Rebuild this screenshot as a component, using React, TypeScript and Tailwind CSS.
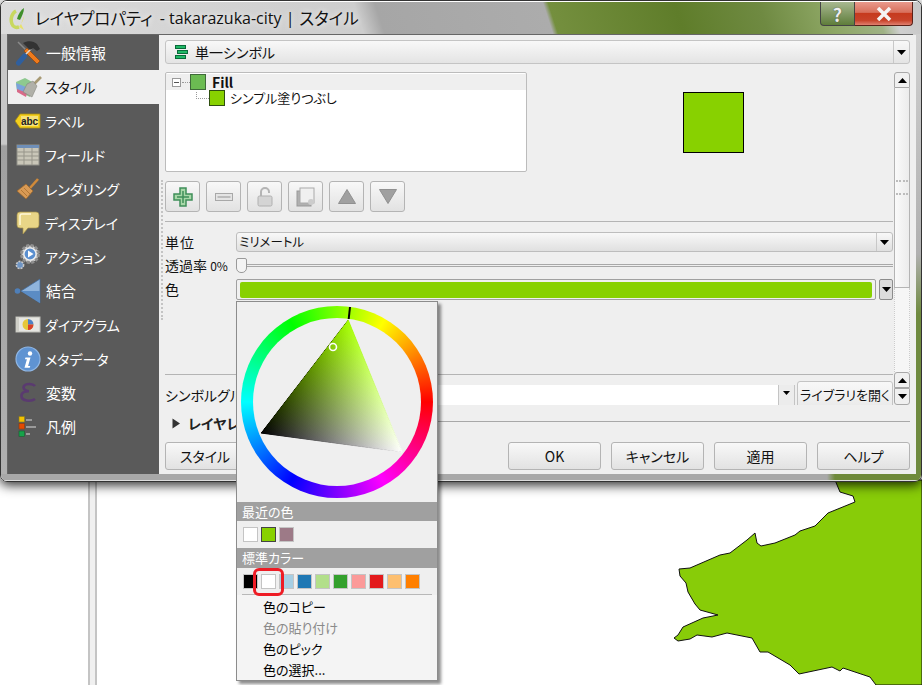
const sideItems = [
  { label: "一般情報", icon: <ToolsIcon />, kanji: true },
  { label: "スタイル", icon: <BrushIcon />, active: true },
  { label: "ラベル", icon: <LabelIcon /> },
  { label: "フィールド", icon: <TableIcon /> },
  { label: "レンダリング", icon: <BroomIcon /> },
  { label: "ディスプレイ", icon: <BubbleIcon /> },
  { label: "アクション", icon: <GearIcon /> },
  { label: "結合", icon: <JoinIcon />, kanji: true },
  { label: "ダイアグラム", icon: <DiagramIcon /> },
  { label: "メタデータ", icon: <InfoIcon /> },
  { label: "変数", icon: <EpsilonIcon />, kanji: true },
  { label: "凡例", icon: <LegendIcon />, kanji: true },
];

const recentColors = ["bg-white border-[#c4c4c4]", "bg-[#88d100] border-[#444]", "bg-[#9d7a87] border-[#c4c4c4]"];
const standardColors = [
  "bg-black",
  "bg-white",
  "bg-[#a6cee3]",
  "bg-[#1f78b4]",
  "bg-[#b2df8a]",
  "bg-[#33a02c]",
  "bg-[#fb9a99]",
  "bg-[#e31a1c]",
  "bg-[#fdbf6f]",
  "bg-[#ff7f00]",
];

const btnClass =
  "flex items-center justify-center rounded-[3px] border border-[#b4b4b4] bg-gradient-to-b from-[#f8f8f8] to-[#e2e2e2] text-[14px] text-[#111]";

function ToolsIcon() {
  return (
    <svg width="26" height="26" viewBox="0 0 26 26">
      <path d="M3 2l9 9" stroke="#8a8a8a" strokeWidth="1.500" />
      <path d="M12 8l13 13-3 3L9 11z" fill="#ee7a1c" stroke="#8a3d05" strokeWidth="0.6" />
      <path d="M9 16l7-7" stroke="#d8d8d8" strokeWidth="1.500" />
      <path d="M3.500 23l6-7" stroke="#2f5f9e" strokeWidth="5" strokeLinecap="round" />
      <path d="M8 3c5-3 11-2 14 1l3 5-3 2-4-3-3 2-4-4z" fill="#333" />
    </svg>
  );
}

function BrushIcon() {
  return (
    <svg width="28" height="24" viewBox="0 0 28 24">
      <path d="M2 7l9-4 9 5-4 14L3 16z" fill="#8ec98f" />
      <path d="M2 8l10 4-1 6-8-3z" fill="#7aa3dc" />
      <path d="M3 14l10 4-1 4-9-5z" fill="#d86a88" />
      <path d="M18 11l9-9" stroke="#a89a74" strokeWidth="2.600" />
      <path d="M13 9l6-3 4 5-5 11-9-5z" fill="#b0b0a8" stroke="#7c7c74" strokeWidth="0.5" />
    </svg>
  );
}

function LabelIcon() {
  return (
    <svg width="26" height="16" viewBox="0 0 26 16">
      <path d="M0 8l5-7h20v14H5z" fill="#f2cf1e" stroke="#a98e10" strokeWidth="0.8" />
      <rect x="6" y="3" width="17" height="10" fill="#f6e27a" />
      <text x="14.5" y="11.5" textAnchor="middle" fontSize="10" fontWeight="700" fill="#222" fontFamily="Liberation Sans, sans-serif">
        abc
      </text>
    </svg>
  );
}

function TableIcon() {
  return (
    <svg width="24" height="22" viewBox="0 0 24 22">
      <rect x="1" y="1" width="22" height="20" fill="#c9c6b8" stroke="#8f8f88" />
      <rect x="1" y="1" width="22" height="3" fill="#6f8fb8" />
      <path d="M1 8h22M1 12h22M1 16h22M8 4v17M16 4v17" stroke="#97958a" strokeWidth="1" />
    </svg>
  );
}

function BroomIcon() {
  return (
    <svg width="24" height="24" viewBox="0 0 24 24">
      <path d="M14 11L22 2" stroke="#d08a3a" strokeWidth="2.600" />
      <path d="M1 14l9-7 7 7-7 8z" fill="#d99a55" stroke="#9a6428" strokeWidth="0.7" />
      <path d="M5 13l6 6M8 11l6 6" stroke="#a8702f" strokeWidth="0.8" />
    </svg>
  );
}

function BubbleIcon() {
  return (
    <svg width="24" height="24" viewBox="0 0 24 24">
      <path d="M4 1h16a3 3 0 0 1 3 3v10a3 3 0 0 1-3 3H12l-5 6v-6H4a3 3 0 0 1-3-3V4a3 3 0 0 1 3-3z" fill="#e8d587" stroke="#a6924a" strokeWidth="0.7" />
      <path d="M4 14V5a2 2 0 0 1 2-2h9" stroke="#fff8d8" strokeWidth="1.500" fill="none" />
    </svg>
  );
}

function GearIcon() {
  return (
    <svg width="26" height="26" viewBox="0 0 26 26">
      <circle cx="5" cy="21" r="3.600" fill="#6f95c4" stroke="#c8c8c8" strokeWidth="1.600" strokeDasharray="2 1" />
      <circle cx="15" cy="10" r="8.500" fill="#d8d8d8" stroke="#8f8f8f" strokeWidth="3" strokeDasharray="3 1.500" />
      <circle cx="15" cy="10" r="6" fill="#5a8fd0" stroke="#eee" strokeWidth="1.200" />
      <path d="M13 6.500l5.500 3.500-5.500 3.500z" fill="#fff" />
    </svg>
  );
}

function JoinIcon() {
  return (
    <svg width="28" height="26" viewBox="0 0 28 26">
      <circle cx="3.500" cy="13" r="2.800" fill="#4f7fb8" />
      <path d="M7 13L26 1v24z" fill="#8fb4dc" stroke="#3f6a9e" strokeWidth="0.7" />
      <path d="M7 13l19 0v12z" fill="#5b8cc4" />
    </svg>
  );
}

function DiagramIcon() {
  return (
    <svg width="26" height="18" viewBox="0 0 26 18">
      <rect x="1" y="1" width="24" height="15" fill="#e6e6e2" stroke="#bcbcb6" />
      <rect x="1" y="1" width="3" height="15" fill="#cfcfc8" />
      <path d="M13 3a5.500 5.500 0 1 0 5.500 5.500H13z" fill="#e6c73a" />
      <path d="M13 3a5.500 5.500 0 0 1 5.500 5.500H13z" fill="#4f81c4" />
      <path d="M13 8.500h5.500A5.500 5.500 0 0 1 13 14z" fill="#d8402a" />
    </svg>
  );
}

function InfoIcon() {
  return (
    <svg width="26" height="26" viewBox="0 0 26 26">
      <circle cx="13" cy="13" r="12" fill="#5f93d2" stroke="#8fb6e4" strokeWidth="1.200" />
      <circle cx="15" cy="7.500" r="2.200" fill="#fff" />
      <path d="M10.500 11.500h5l-2.400 8.500h2.200l-.6 1.800h-5.200l2.400-8.500h-2z" fill="#fff" />
    </svg>
  );
}

function EpsilonIcon() {
  return (
    <svg width="18" height="22" viewBox="0 0 18 22">
      <path d="M16 4c-2-2.400-9-3-11 0-1.500 2.500 1 5 5 5.200-5-.2-8 2-7.500 5.300C3 19 12 20 16 17" fill="none" stroke="#5a3a70" strokeWidth="2.600" />
    </svg>
  );
}

function LegendIcon() {
  return (
    <svg width="20" height="22" viewBox="0 0 20 22">
      <rect x="1" y="0.500" width="5.500" height="5.500" fill="#f2c200" stroke="#8a7a20" strokeWidth="0.6" />
      <rect x="1" y="7.500" width="5.500" height="5.500" fill="#e24a00" stroke="#8a3a10" strokeWidth="0.6" />
      <rect x="1" y="15" width="5.500" height="5.500" fill="#16a34a" stroke="#1a5a30" strokeWidth="0.6" />
      <path d="M8 4h6M8 11h10M8 18h4" stroke="#9a9a9a" strokeWidth="1.800" />
    </svg>
  );
}

function SingleSymbolIcon() {
  return (
    <svg width="13" height="14" viewBox="0 0 13 14">
      <rect x="0.500" y="0.500" width="10" height="3" fill="#1fb866" stroke="#0a6a3a" />
      <rect x="2.500" y="5.500" width="10" height="3" fill="#1fb866" stroke="#0a6a3a" />
      <rect x="0.500" y="10.500" width="10" height="3" fill="#1fb866" stroke="#0a6a3a" />
    </svg>
  );
}

function QgisLogo() {
  return (
    <svg width="18" height="26" viewBox="0 0 18 26">
      <path d="M7 5c-4 2-6 8-4 13 1 3 4 4 7 3" fill="none" stroke="#c8d860" strokeWidth="3.500" />
      <path d="M15 2c-3 2-6 6-7 11l3 1c2-4 4-8 4-12z" fill="#3f8f2a" />
      <path d="M10 21c2-3 5-7 5-11l-3 8 3 6z" fill="#e8e26a" />
    </svg>
  );
}

function Caret({ size = "m" }: { size?: "s" | "m" }) {
  return (
    <svg width={size === "m" ? 9 : 7} height={size === "m" ? 5 : 4} viewBox="0 0 9 5">
      <path d="M0 0h9L4.500 5z" fill="#000" />
    </svg>
  );
}

function CaretUp() {
  return (
    <svg width="9" height="5" viewBox="0 0 9 5">
      <path d="M0 5h9L4.500 0z" fill="#000" />
    </svg>
  );
}

function ToolButton({ children }: { children: React.ReactNode }) {
  return <div className={`${btnClass} h-[31px] w-[35px] border-[#a8a8a8]`}>{children}</div>;
}

function ComboField({ children, className }: { children: React.ReactNode; className?: string }) {
  return (
    <div className={`flex items-center rounded-[3px] border border-[#bdbdbd] bg-gradient-to-b from-[#f8f8f8] to-[#e0e0e0] ${className}`}>
      <div className="flex flex-1 items-center pl-[2px] text-[12.5px] text-[#111]">{children}</div>
      <div className="flex h-full w-[16px] items-center justify-center border-l border-[#c8c8c8]">
        <Caret />
      </div>
    </div>
  );
}

function ColorWheel() {
  return (
    <div className="relative h-[192px] w-[192px]">
      <div className="flex h-full w-full items-center justify-center rounded-full bg-[conic-gradient(from_90deg,#f00,#f0f,#00f,#0ff,#0f0,#ff0,#f00)]">
        <div className="h-[168px] w-[168px] rounded-full bg-[#efefef]" />
      </div>
      <svg className="absolute left-0 top-0" width="192" height="192" viewBox="0 0 192 192">
        <defs>
          <linearGradient id="whiteRamp" gradientUnits="userSpaceOnUse" x1="161" y1="146" x2="63.300" y2="70.800">
            <stop offset="0" stopColor="#fff" />
            <stop offset="1" stopColor="#000" />
          </linearGradient>
          <linearGradient id="hueRamp" gradientUnits="userSpaceOnUse" x1="107" y1="14" x2="90" y2="136.400">
            <stop offset="0" stopColor="#a6ff00" />
            <stop offset="1" stopColor="#000" />
          </linearGradient>
          <linearGradient id="rightEdge" gradientUnits="userSpaceOnUse" x1="107" y1="14" x2="161" y2="146">
            <stop offset="0" stopColor="#a6ff00" />
            <stop offset="1" stopColor="#fff" />
          </linearGradient>
          <linearGradient id="bottomEdge" gradientUnits="userSpaceOnUse" x1="20" y1="127" x2="161" y2="146">
            <stop offset="0" stopColor="#000" />
            <stop offset="1" stopColor="#fff" />
          </linearGradient>
        </defs>
        <g className="isolate">
          <path d="M107 14L20 127L161 146z" fill="url(#hueRamp)" />
          <path d="M107 14L20 127L161 146z" fill="url(#whiteRamp)" className="mix-blend-plus-lighter" />
        </g>
        <path d="M107 14L161 146" stroke="url(#rightEdge)" strokeWidth="1.200" />
        <path d="M20 127L161 146" stroke="url(#bottomEdge)" strokeWidth="1" />
        <path d="M109 1L107.700 13" stroke="#000" strokeWidth="2" />
        <circle cx="92" cy="41" r="3.500" fill="none" stroke="#fff" strokeWidth="1.600" />
      </svg>
    </div>
  );
}

function ColorPopup() {
  return (
    <div className="absolute left-[236px] top-[301px] h-[380px] w-[202px] border border-[#8c8c8c] bg-[#efefef] shadow-[3px_3px_3px_rgba(0,0,0,0.45)]">
      <div className="h-[200px] pl-[4px] pt-[4px]">
        <ColorWheel />
      </div>
      <div className="flex h-[19px] items-center bg-[#a0a0a0] pl-[5px] text-[13px] text-white">最近の色</div>
      <div className="flex h-[27px] gap-[3px] pl-[6px] pt-[6px]">
        {recentColors.map((c) => (
          <div key={c} className={`h-[15px] w-[15px] border ${c}`} />
        ))}
      </div>
      <div className="flex h-[20px] items-center bg-[#a0a0a0] pl-[5px] text-[13px] text-white">標準カラー</div>
      <div className="flex h-[26px] gap-[3px] pl-[6px] pt-[6px]">
        {standardColors.map((c) => (
          <div key={c} className={`h-[15px] w-[15px] border border-[#c4c4c4] ${c}`} />
        ))}
      </div>
      <div className="mx-[5px] h-px bg-[#b8b8b8]" />
      <div className="bg-[#f4f4f4] pt-px text-[13px] text-black">
        {["色のコピー", "色の貼り付け", "色のピック", "色の選択..."].map((item, i) => (
          <div key={item} className={`flex h-[21px] items-center pl-[26px] ${i === 1 ? "text-[#8a8a8a]" : ""}`}>
            {item}
          </div>
        ))}
      </div>
      {/* red hand-drawn mark around the white swatch */}
      <div className="absolute left-[16px] top-[266px] h-[28px] w-[31px] rounded-[6px] border-[3px] border-[#ee1c25]" />
    </div>
  );
}

function Sidebar() {
  return (
    <div className="h-full w-[151px] shrink-0 bg-[#5a5a5a] pt-px">
      {sideItems.map((item) => (
        <div key={item.label} className={`flex h-[34px] items-center ${item.active ? "bg-[#efefef] text-[#111]" : "text-white"}`}>
          <div className="flex w-[36px] shrink-0 items-center justify-center pl-[3px]">{item.icon}</div>
          <span className={`${item.kanji ? "pl-[2px] text-[15px]" : "pl-px text-[14px]"} ${item.active ? "pl-[3px]" : ""}`}>{item.label}</span>
        </div>
      ))}
    </div>
  );
}

function MainPanel() {
  return (
    <div className="relative flex h-full flex-1 flex-col bg-[#efefef] px-[6px] pt-[5px]">
      <div className="absolute left-[2px] top-[145px] h-[140px] w-[2px] border-l-2 border-dotted border-[#c4c4c4]" />

      <div className="flex h-[24px] items-center rounded-[3px] border border-[#c4c4c4] bg-gradient-to-b from-[#f8f8f8] to-[#e4e4e4]">
        <div className="flex flex-1 items-center gap-[7px] pl-[9px] text-[14px] text-[#111]">
          <SingleSymbolIcon />
          単一シンボル
        </div>
        <div className="flex h-full w-[16px] items-center justify-center border-l border-[#c8c8c8]">
          <Caret />
        </div>
      </div>

      <div className="mt-[8px] flex h-[333px]">
        <div className="w-[728px] overflow-hidden">
          <div className="flex h-[100px]">
            <div className="w-[362px] rounded-[2px] border border-[#bcbcbc] bg-white pt-px text-[13px] text-[#111]">
              <div className="flex h-[16px] items-center bg-[#efefef] pl-[6px]">
                <div className="flex h-[9px] w-[9px] items-center justify-center border border-[#9a9a9a] bg-white">
                  <div className="h-px w-[5px] bg-[#555]" />
                </div>
                <div className="ml-px w-[8px] border-t border-dotted border-[#9a9a9a]" />
                <div className="h-[16px] w-[16px] border border-[#3f6a3a] bg-[#6bbb52]" />
                <span className="ml-[6px] text-[14px] font-bold">Fill</span>
              </div>
              <div className="flex h-[16px] items-center pl-[30px]">
                <div className="mb-[6px] h-[7px] w-[13px] border-b border-l border-dotted border-[#9a9a9a]" />
                <div className="h-[16px] w-[16px] border border-[#2f4f10] bg-[#88d100]" />
                <span className="ml-[5px]">シンプル塗りつぶし</span>
              </div>
            </div>
            <div className="pl-[156px] pt-[20px]">
              <div className="h-[61px] w-[61px] border border-black bg-[#88d100]" />
            </div>
          </div>

          <div className="mt-[9px] flex gap-[6px]">
            <ToolButton>
              <svg width="20" height="20" viewBox="0 0 20 20">
                <path d="M7 1h6v6h6v6h-6v6H7v-6H1V7h6z" fill="#a8d8a8" stroke="#3f8f5a" strokeWidth="1.500" />
                <path d="M10 4v12M4 10h12" stroke="#3f8f5a" strokeWidth="1.500" />
              </svg>
            </ToolButton>
            <ToolButton>
              <svg width="18" height="8" viewBox="0 0 18 8">
                <rect x="0.500" y="0.500" width="17" height="7" fill="#e4e4e4" stroke="#a8a8a8" />
                <rect x="2.500" y="3" width="13" height="2" fill="#bcbcbc" />
              </svg>
            </ToolButton>
            <ToolButton>
              <svg width="16" height="20" viewBox="0 0 16 20">
                <path d="M4 9V5a4 4 0 0 1 8 0v1" fill="none" stroke="#b4b4b4" strokeWidth="2" />
                <rect x="1" y="9" width="14" height="10" rx="1.500" fill="#d4d4d4" stroke="#b0b0b0" />
              </svg>
            </ToolButton>
            <ToolButton>
              <svg width="20" height="20" viewBox="0 0 20 20">
                <rect x="1" y="4" width="14" height="15" fill="#b0b0b0" stroke="#999" />
                <rect x="4" y="1" width="14" height="15" fill="#f0f0f0" stroke="#aaa" />
                <circle cx="15" cy="15" r="3" fill="#ccc" />
              </svg>
            </ToolButton>
            <ToolButton>
              <svg width="18" height="15" viewBox="0 0 18 15">
                <path d="M0.500 14.500h17L9 0.500z" fill="#a0a0a0" stroke="#909090" />
              </svg>
            </ToolButton>
            <ToolButton>
              <svg width="18" height="15" viewBox="0 0 18 15">
                <path d="M0.500 0.500h17L9 14.500z" fill="#a0a0a0" stroke="#909090" />
              </svg>
            </ToolButton>
          </div>

          <div className="mt-[9px] h-px bg-[#b4b4b4]" />

          <div className="mt-[10px] flex h-[20px] items-center">
            <div className="w-[71px] text-[14px] tracking-[1px] text-[#111]">単位</div>
            <ComboField className="h-[20px] flex-1">ミリメートル</ComboField>
          </div>

          <div className="mt-[4px] flex h-[18px] items-center">
            <div className="w-[71px] whitespace-nowrap text-[14px] text-[#111]">
              透過率 <span className="text-[12px]">0%</span>
            </div>
            <div className="relative flex-1">
              <div className="h-[3px] border-y border-[#a8a8a8] bg-[#efefef]" />
              <div className="absolute left-0 top-[-6px] h-[15px] w-[11px] rounded-b-[5px] rounded-t-[2px] border border-[#9a9a9a] bg-[#f4f4f4]" />
            </div>
          </div>

          <div className="mt-[5px] flex h-[21px]">
            <div className="w-[71px] text-[14px] text-[#111]">色</div>
            <div className="flex h-[21px] flex-1 items-center gap-[3px]">
              <div className="flex h-full flex-1 items-center rounded-[2px] border border-[#a0a0a0] bg-[#f0f0f0] px-[3px]">
                <div className="h-[16px] w-full rounded-[2px] bg-[#88d100]" />
              </div>
              <div className="flex h-full w-[14px] items-center justify-center rounded-[2px] border border-[#8c8c8c] bg-[#dcdcdc]">
                <Caret />
              </div>
            </div>
          </div>

          <div className="mt-[74px] h-px bg-[#b4b4b4]" />

          <div className="mt-[6px] flex h-[30px] items-start">
            <div className="w-[71px] whitespace-nowrap pt-[4px] text-[14px] text-[#111]">シンボルグル</div>
            <div className="mt-[4px] flex h-[26px] flex-1 items-start border-l border-[#c4c4c4] bg-white">
              <div className="flex-1" />
              <div className="flex h-[26px] w-[17px] justify-center border-x border-[#c4c4c4] bg-[#ececec] pt-[6px]">
                <Caret size="s" />
              </div>
            </div>
            <div className="ml-[2px] flex h-[30px] w-[96px] items-start justify-center rounded-t-[3px] border border-[#c4c4c4] bg-gradient-to-b from-[#f8f8f8] to-[#e8e8e8] pt-[3px] text-[13px] text-[#111]">
              ライブラリを開く
            </div>
          </div>
        </div>

        <div className="ml-px flex w-[16px] flex-col">
          <div className="flex h-[16px] items-center justify-center rounded-t-[3px] border border-[#a8a8a8] bg-[#f0f0f0]">
            <CaretUp />
          </div>
          <div className="flex h-[200px] items-center justify-center border-x border-b border-[#b4b4b4] bg-gradient-to-r from-[#fafafa] to-[#ececec]">
            <div className="h-[15px] w-[12px] border-y-2 border-dotted border-[#bcbcbc]" />
          </div>
          <div className="h-[84px] border-x border-dotted border-[#ccc] bg-[#f6f6f6]" />
          <div className="flex h-[16px] items-center justify-center rounded-t-[3px] border border-[#a8a8a8] bg-[#f0f0f0]">
            <CaretUp />
          </div>
          <div className="flex h-[17px] items-center justify-center rounded-b-[3px] border border-[#a8a8a8] bg-[#f0f0f0]">
            <Caret />
          </div>
        </div>
      </div>

      <div className="flex h-[37px] items-center">
        <svg width="9" height="11" viewBox="0 0 9 11" className="ml-[7px]">
          <path d="M0.500 0.500L8 5.500L0.500 10.500z" fill="#333" />
        </svg>
        <span className="ml-[7px] text-[14px] font-bold text-[#222]">レイヤレ</span>
        <div className="mb-[4px] ml-[20px] h-px flex-1 bg-[#a8a8a8]" />
      </div>

      <div className="flex h-[28px]">
        <div className={`${btnClass} w-[80px]`}>スタイル</div>
        <div className="flex-1" />
        <div className="flex gap-[10px]">
          <div className={`${btnClass} w-[93px] border-[#8c8c8c]`}>OK</div>
          <div className={`${btnClass} w-[93px]`}>キャンセル</div>
          <div className={`${btnClass} w-[93px]`}>適用</div>
          <div className={`${btnClass} w-[93px]`}>ヘルプ</div>
        </div>
      </div>
    </div>
  );
}

function PropertiesWindow() {
  return (
    <div className="absolute left-0 top-0 flex h-[482px] w-[922px] flex-col overflow-hidden rounded-[7px] border border-[#333] shadow-[0_3px_12px_rgba(0,0,0,0.85)]">
      <div className="flex h-[33px] shrink-0 border-t border-white bg-[linear-gradient(72deg,#dcdcdc_0px,#cdcdcd_345px,#a6a6a6_365px,#acacac_525px,#748f3e_530px,#5f7d2a_650px,#6f8a42_730px,#8ea765_795px,#9fb285_840px,#cfcfcf_856px,#c8c8c8_880px)]">
        <div className="ml-[8px] mt-[4px]">
          <QgisLogo />
        </div>
        <div className="ml-[8px] mt-[4px] flex whitespace-nowrap text-[16.5px] leading-[24px] text-[#111] [text-shadow:0_0_6px_#fff]">
          <span>レイヤプロパティ</span>
          <span className="ml-[7px] font-['Open_Sans',sans-serif] text-[16px]">- takarazuka-city |</span>
          <span className="ml-[5px]">スタイル</span>
        </div>
        <div className="ml-auto mr-[8px] flex h-[24px]">
          <div className="flex w-[35px] items-center justify-center rounded-bl-[4px] border border-t-0 border-[#444] bg-gradient-to-b from-[#a8b890] to-[#5f7d3a] text-[18px] font-bold leading-none text-[#eee] [text-shadow:0_0_1px_#333]">
            ?
          </div>
          <div className="flex w-[58px] items-center justify-center rounded-br-[4px] border border-l-0 border-t-0 border-[#5a2018] bg-[linear-gradient(#e89a8c,#d8705c_45%,#c63a1e_50%,#c8432a_80%,#e08070)]">
            <svg width="16" height="14" viewBox="0 0 16 14">
              <path d="M2 1l12 12M14 1L2 13" stroke="#f4f4f4" strokeWidth="3.500" />
            </svg>
          </div>
        </div>
      </div>
      <div className="flex flex-1 bg-[#b0b0b0]">
        <div className="w-[6px] shrink-0 bg-[linear-gradient(#c8c8c8,#c8c8c8_110px,#a0a0a0_112px,#b0b0b0)]" />
        <div className="flex h-[440px] w-[906px] border border-b-0 border-r-0 border-[#666]">
          <Sidebar />
          <MainPanel />
        </div>
        <div className="flex-1 bg-[linear-gradient(#cfcfcf,#b0b0b0_220px,#6f8a3f_280px,#6f8a3f)]" />
      </div>
      <div className="h-[7px] shrink-0 border-b border-[#ddd] bg-[linear-gradient(to_right,#a8a8a8,#a8a8a8_826px,#6f8a3a_834px,#6f8a3a)]" />
    </div>
  );
}

export default function App() {
  return (
    <div className="relative h-[685px] w-[922px] overflow-hidden bg-white font-['Noto_Sans_CJK_JP','Noto_Sans',sans-serif] [font-feature-settings:'palt']">
      {/* map canvas behind the dialog */}
      <div className="absolute left-[88px] top-[470px] h-[215px] w-[9px] border-x-2 border-x-[#c4c4c4] bg-[#f0f0f0]" />
      <svg className="absolute left-0 top-0" width="922" height="685" viewBox="0 0 922 685">
        <path
          d="M835 480L840 492L853 496L855 502L828 513L815 526L800 531L795 535L775 543L761 546L757 543L755 533L747 540L730 553L720 555L690 568L679 569L680 576L686 583L688 592L695 604L700 610L718 615L703 618L683 627L678 635L674 638L678 641L690 639L697 635L712 637L727 633L752 638L760 652L768 652L790 665L799 674L832 667L840 671L843 668L870 677L876 685L922 685L922 480z"
          fill="#88cc08"
          stroke="#111"
          strokeWidth="1"
        />
      </svg>
      <PropertiesWindow />
      <ColorPopup />
    </div>
  );
}
